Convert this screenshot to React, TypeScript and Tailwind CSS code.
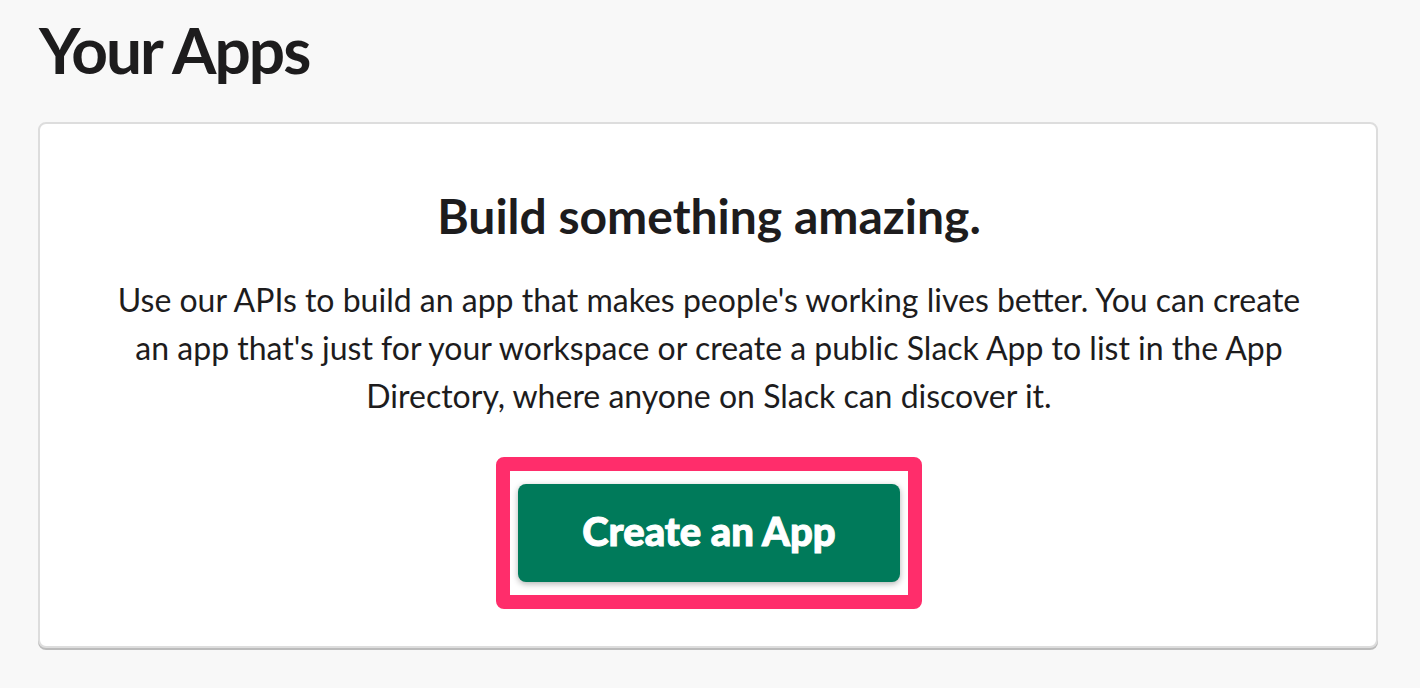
export default function App() {
  return (
    <main className="min-h-screen bg-[#f8f8f8] pb-9 pl-[38px] pr-[42px] pt-[14px] font-['Lato',sans-serif] text-[#1d1c1d]">
      <h1 className="pl-px text-[64px] font-bold leading-[72px] tracking-[-2px]">Your Apps</h1>
      <section className="mt-9 flex flex-col items-center rounded-lg border-2 border-[#dddddd] bg-white pb-[37px] pl-[76px] pr-[74px] pt-[62px] text-center shadow-[0_2px_0_#bbbbbb]">
        <h2 className="text-[48px] font-bold leading-[60px]">Build something amazing.</h2>
        <p className="mt-[30px] text-[32px] leading-[48px]">
          Use our APIs to build an app that makes people's working lives better. You can create an app
          that's just for your workspace or create a public Slack App to list in the App Directory,
          where anyone on Slack can discover it.
        </p>
        <div className="mt-[37px] rounded-lg border-[14px] border-[#ff2d6b] px-2 py-[13px]">
          <button
            type="button"
            className="block h-[98px] rounded-lg bg-[#007a5a] px-16 pb-1 text-[40px] font-black text-white shadow-[0_2px_6px_rgba(0,0,0,0.3)] [-webkit-text-stroke:1px_#ffffff]"
          >
            Create an App
          </button>
        </div>
      </section>
    </main>
  );
}
